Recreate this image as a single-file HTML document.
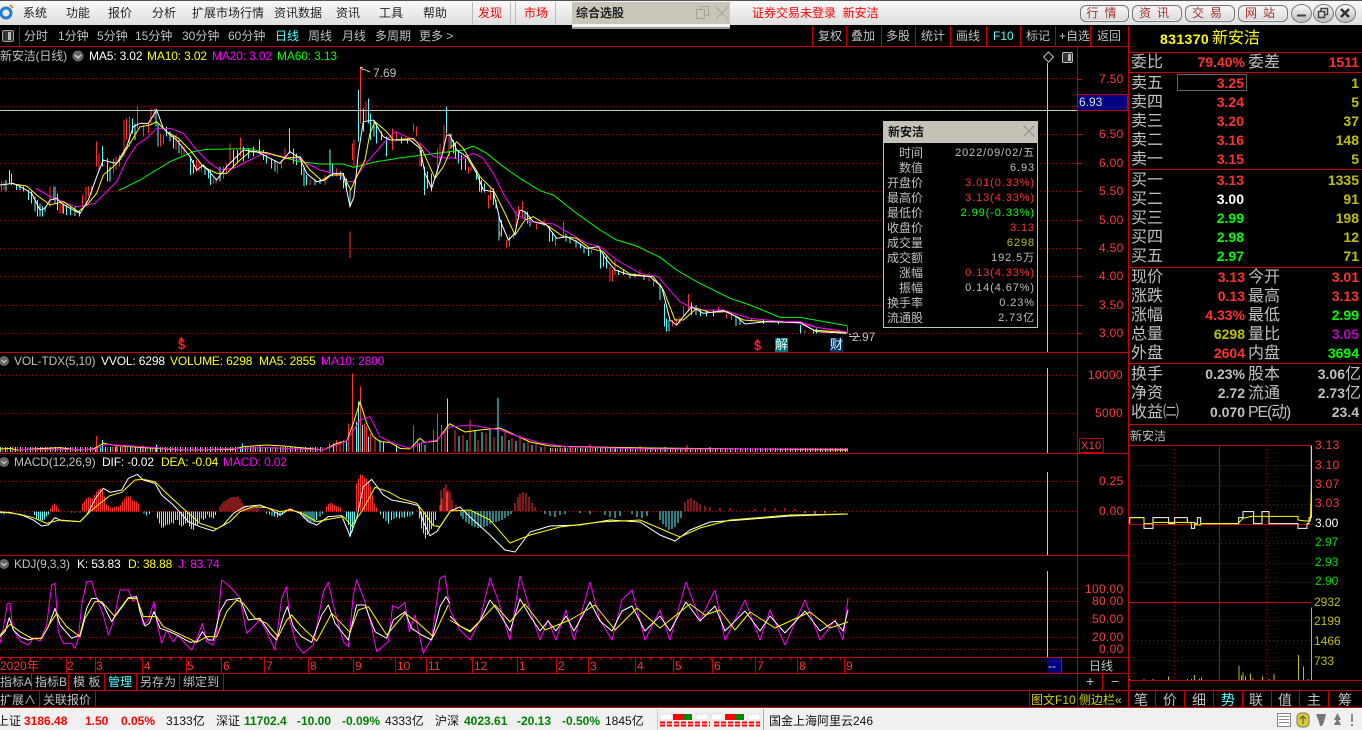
<!DOCTYPE html>
<html lang="zh"><head><meta charset="utf-8"><title>新安洁</title>
<style>
html,body{margin:0;padding:0;background:#000;width:1362px;height:730px;overflow:hidden}
body{position:relative;font-family:"Liberation Sans","WenQuanYi Zen Hei","Noto Sans CJK SC",sans-serif;font-size:12px;color:#c0c0c0}
.t{position:absolute;white-space:nowrap;line-height:16px;height:16px}
.box{position:absolute}
.m{color:#222;font-size:12px;top:5px}
.r{color:#ff3232}.y{color:#ff0}.g{color:#0f0}.p{color:#f0f}.c{color:#5ff}.w{color:#fff}.o{color:#c0c000}.gy{color:#c0c0c0}
.i{font-size:12px;top:48px;letter-spacing:-.15px}
.a{color:#ff3a3a;font-size:12px;letter-spacing:.3px}
.l{position:absolute;left:1131px;margin-top:1px;font-size:16px;line-height:18px;height:18px;color:#c0c0c0;white-space:nowrap}
.l2{left:1248px}
.v{position:absolute;right:117px;font-size:14px;font-weight:bold;line-height:18px;height:18px;white-space:nowrap;letter-spacing:0}
.v2{right:3px}
.tb{color:#c0c0c0;top:28px;font-size:12px}
.btn{position:absolute;top:5px;height:15px;border:1px solid #777;border-radius:6px;background:linear-gradient(#f8f8f8,#d8d8d8);color:#a83030;text-align:center;line-height:15px;font-size:12px;letter-spacing:6px;box-shadow:inset 0 0 0 1px #eee}
.cb{position:absolute;top:4px;width:19px;height:17px;border:1px solid #777;border-radius:50%;background:linear-gradient(#fafafa,#bbb)}
.tl{right:439px;color:#c0c0c0}
.tv{right:327px;letter-spacing:.9px;font-size:11px;color:#c0c0c0}
.x{color:#ff3232;font-size:12px;top:658px}
.st{top:713px;font-size:12px;color:#111}
.sr{color:#f00;font-weight:bold}.sg{color:#008000;font-weight:bold}
.tab{color:#c0c0c0;top:692px;font-size:14px}
</style></head><body>

<svg class="box" style="left:0;top:0" width="1362" height="730" xmlns="http://www.w3.org/2000/svg" fill="none">
<!-- dotted grid -->
<path stroke="#a80000" stroke-dasharray="1 3" d="M0 78.5H1077M0 106.5H1077M0 134.5H1077M0 163.5H1077M0 191.5H1077M0 220.5H1077M0 248.5H1077M0 276.5H1077M0 305.5H1077M0 333.5H1077M0 375.5H1077M0 413.5H1077M0 481.5H1077M0 511.5H1077M0 588.5H1077M0 601.5H1077M0 619.5H1077M0 637.5H1077M0 649.5H1077"/>
<!-- main candles left -->
<g transform="translate(0 60) scale(.33333)" stroke-width="3" shape-rendering="crispEdges">
<path stroke="#55ffff" d="M18 360V395M28 330V370M35 340V375M50 375V390M60 375V392M70 380V395M85 390V420M95 395V430M105 410V455M113 420V470M120 430V470M128 440V470M135 440V455M165 380V430M172 400V450M190 430V460M200 435V465M212 440V465M225 440V468M238 455V470M307 258V320M322 295V365M330 320V365M397 175V220M405 190V240M468 145V200M474 190V260M500 200V230M510 215V245M520 225V265M537 240V280M572 290V345M580 300V340M615 320V345M625 330V355M632 330V375M660 320V365M700 270V325M712 270V310M730 260V305M745 265V295M760 260V290M778 238V280M790 270V300M800 285V310M815 295V325M825 300V335M868 205V280M880 265V310M890 280V315M905 300V345M912 320V378M920 345V375M945 360V375M960 360V372M990 268V340M997 310V350M1022 335V360M1030 350V385M1040 355V395M1050 390V440M1075 88V245M1090 145V215M1105 115V190M1112 160V240M1122 180V230M1130 190V250M1145 215V240M1160 230V290M1205 230V250M1222 235V250M1265 270V320M1273 320V405M1282 335V385M1295 340V395M1340 140V220"/>
<path stroke="#ff3232" d="M5 365V395M12 365V390M150 380V440M160 380V420M180 430V460M187 430V460M248 405V440M258 380V430M265 380V410M275 378V405M290 245V320M297 280V330M340 295V340M348 290V330M358 285V320M372 180V290M380 175V240M388 170V260M412 140V205M430 195V230M445 190V220M453 145V190M462 145V175M482 220V260M490 225V250M528 225V270M545 260V285M552 260V290M590 300V335M597 305V335M605 310V335M640 355V370M648 355V370M670 320V355M680 310V340M690 250V310M722 232V290M833 310V340M845 300V325M855 265V300M930 360V375M975 345V375M1010 325V350M1050 515V594M1058 250V300M1062 240V320M1082 20V190M1098 125V180M1178 205V270M1190 215V245M1240 190V215M1250 200V230M1260 250V320M1312 265V340M1320 250V310M1332 195V280M1347 220V290"/>
</g>
<g transform="translate(0 60) scale(.33333)" stroke-width="3">
<polyline stroke="#0f0" points="355,392 420,360 510,305 580,275 620,268 750,266 820,285 900,305 960,312 1030,312 1060,322 1130,305 1210,292 1270,285 1350,275"/>
<polyline stroke="#f0f" points="108,385 150,410 190,425 225,440 250,438 285,430 320,395 350,365 380,300 410,255 440,235 470,205 510,205 550,220 590,270 630,310 660,330 700,325 750,300 790,280 850,290 890,295 960,330 1020,345 1040,365 1060,365 1090,320 1150,250 1185,215 1230,235 1260,250 1300,290 1350,295"/>
<polyline stroke="#ff0" points="40,372 80,378 110,405 150,435 190,425 235,455 265,430 290,400 310,345 340,320 360,300 390,250 420,200 450,195 470,185 500,215 535,235 570,270 610,320 650,340 680,340 720,300 750,275 800,278 860,295 900,290 930,330 965,362 990,345 1030,345 1052,390 1075,340 1095,300 1110,220 1125,185 1160,215 1180,240 1240,235 1265,265 1305,355 1330,320 1350,275"/>
<polyline stroke="#fff" points="0,375 40,370 70,385 95,400 120,450 135,445 150,420 170,415 185,430 210,445 240,460 265,420 290,350 310,300 325,305 350,310 380,260 400,200 420,190 445,190 470,150 490,205 510,225 530,240 570,290 590,330 610,315 650,360 680,320 710,290 730,270 770,275 800,290 840,310 870,275 900,295 920,340 950,365 975,360 1000,340 1030,340 1050,440 1062,410 1075,280 1090,185 1120,180 1150,230 1170,240 1230,240 1260,265 1275,340 1295,385 1325,290 1340,225 1350,225"/>
</g>
<!-- main candles right -->
<g transform="translate(450 120) scale(.33333)" stroke-width="3" shape-rendering="crispEdges">
<path stroke="#55ffff" d="M3 40V80M10 60V100M17 70V115M25 90V130M34 105V150M47 115V150M80 150V180M88 165V215M95 180V218M103 190V218M130 205V255M138 240V265M147 285V362M155 300V350M225 275V300M232 275V310M240 290V320M298 320V365M307 340V365M348 340V365M360 350V370M378 360V382M392 370V385M402 380V400M415 385V408M452 390V445M460 400V440M470 410V445M505 450V465M520 450V465M540 460V475M555 460V472M582 465V480M630 490V540M643 550V620M650 595V635M657 600V635M725 548V585M738 555V585M752 570V590M770 570V590M790 570V590M858 590V618M870 600V615M940 600V612M985 605V612M1052 615V640M1090 630V640M1100 625V640M1145 635V640"/>
<path stroke="#ff3232" d="M55 140V160M63 140V155M115 225V265M122 205V240M150 335V350M170 360V383M178 345V380M190 340V355M198 270V320M205 258V300M217 245V295M260 310V328M282 295V320M316 350V378M340 305V350M425 390V400M480 440V485M487 450V485M495 420V465M570 450V470M597 470V485M610 475V500M668 600V620M680 595V615M690 590V610M700 560V590M716 522V575M805 560V575M830 580V595M845 585V600M905 595V605M1065 630V640M1192 618V640"/>
</g>
<g transform="translate(450 120) scale(.33333)" stroke-width="3">
<polyline stroke="#0f0" points="0,95 40,90 70,78 110,100 160,140 210,175 270,212 310,225 380,280 450,330 500,360 560,378 630,412 680,450 740,485 840,535 900,555 990,592 1050,592 1190,617"/>
<polyline stroke="#f0f" points="0,112 30,118 70,100 100,115 130,160 165,230 200,285 240,305 310,312 350,335 410,370 450,380 500,420 570,460 625,470 650,500 690,545 740,570 820,570 900,595 1000,605 1050,610 1100,622 1190,636"/>
<polyline stroke="#ff0" points="0,85 20,65 40,85 60,120 90,170 130,210 165,280 195,345 225,300 250,290 290,315 340,350 380,355 420,385 460,395 490,430 540,462 610,470 640,510 675,600 700,600 740,565 780,577 830,575 880,600 950,605 1050,608 1090,630 1190,638"/>
<polyline stroke="#fff" points="0,45 20,90 50,110 80,160 100,210 130,215 150,300 175,360 195,340 210,270 225,275 250,305 290,315 320,355 350,350 380,365 410,385 445,380 470,420 495,450 540,465 600,470 635,500 660,600 680,615 700,590 725,560 760,580 820,572 860,590 885,612 950,605 1050,608 1100,635 1190,640"/>
<path stroke="#f0f" d="M1000 605H1050L1100 622L1190 636"/>
</g>
<!-- high low pointers -->
<path stroke="#c0c0c0" d="M360 67.5H363M360 67.5L363 70M363 69L370 72M849 334.5H851M849 336.5H860"/>
<!-- crosshair -->
<path stroke="#c8c8c8" d="M0 110.5H1078M1047.5 63V353M1047.5 368V453M1047.5 472V555M1047.5 571V657"/>
<path stroke="#c0c0c0" d="M1048.5 52L1053.5 57L1048.5 62L1043.5 57Z"/>
<rect x="1062.5" y="52.5" width="10" height="10" rx="1.5" stroke="#bbb" fill="#333"/><rect x="1068" y="54" width="3" height="7" fill="#bbb"/>

<!-- volume -->
<g stroke-width="1" shape-rendering="crispEdges">
<path d="M0 449.5H325" stroke="#55ffff" stroke-width="5" stroke-dasharray="1 4"/>
<path d="M2 449.5H325" stroke="#ff3232" stroke-width="5" stroke-dasharray="1 4"/>
<path d="M550 450H848" stroke="#55ffff" stroke-width="4" stroke-dasharray="1 4"/>
<path d="M552 450H848" stroke="#ff3232" stroke-width="4" stroke-dasharray="1 4"/>
</g>
<g transform="translate(0 355) scale(.33333)" stroke-width="3" shape-rendering="crispEdges">
<path stroke="#ff3232" d="M1057 55V291M1081 95V291M1045 205V291M1093 205V291M1100 215V291M1112 235V291M1125 250V291M1240 212V291M1252 250V291M1265 260V291M1300 225V291M1312 175V291M1325 210V291M1335 230V291M290 243V291M988 265V291M1010 255V291M1020 258V291M1030 255V291M375 268V291M430 272V291M350 270V291M850 272V291M760 272V291"/>
<path stroke="#55ffff" d="M1069 200V291M1075 140V291M1087 210V291M1105 245V291M1140 255V291M1150 262V291M1190 270V291M1342 130V291M307 255V291M1000 265V291M1040 255V291M728 265V291M780 270V291M470 268V291M1275 270V291M1258 265V291"/>
</g>
<g stroke-width="1" shape-rendering="crispEdges">
<path stroke="#ff3232" d="M455 430V452M463 435V452M470 420V452M478 440V452M486 433V452M494 437V452M505 432V452M512 438V452M520 435V452M528 442V452M536 444V452M545 446V452M560 445V452M570 446V452M590 444V452M640 446V452M687 445V452"/>
<path stroke="#55ffff" d="M459 436V452M467 440V452M475 430V452M482 432V452M490 430V452M498 398V452M502 436V452M509 440V452M516 441V452M524 443V452M532 445V452M541 447V452M565 447V452M615 447V452M665 447V452M710 447V452"/>
</g>
<g transform="translate(0 355) scale(.33333)" stroke-width="3">
<polyline stroke="#ff0" points="0,282 30,280 50,285 100,282 180,278 230,285 280,282 310,265 350,272 420,277 470,280 550,285 700,283 730,275 800,270 850,273 970,285 1010,265 1040,258 1060,205 1080,140 1100,205 1120,245 1140,260 1170,262 1200,280 1230,282 1260,250 1275,262 1310,258 1350,205"/>
<polyline stroke="#f0f" points="50,284 280,284 320,268 420,275 560,285 800,278 970,285 1040,258 1080,195 1110,185 1140,245 1180,265 1230,280 1260,265 1310,255 1350,215"/>
</g>
<polyline stroke="#ff0" points="450,424 465,432 480,430 500,428 515,435 530,442 550,446 590,447 650,448 848,450"/>
<polyline stroke="#f0f" points="450,427 470,425 500,430 520,437 540,443 570,447 650,449 848,449"/>
<!-- macd -->
<g transform="translate(0 355) scale(.33333)" stroke-width="3" shape-rendering="crispEdges">
<path stroke="#ff3232" d="M152 469V460M158 469V450M164 469V445M170 469V452M176 469V462M248 469V445M254 469V438M260 469V430M266 469V428M272 469V428M278 469V430M284 469V420M290 469V410M296 469V403M302 469V400M308 469V405M314 469V425M320 469V448M326 469V452M332 469V458M338 469V458M344 469V456M350 469V455M356 469V455M362 469V450M368 469V440M374 469V430M380 469V424M386 469V424M392 469V425M398 469V437M404 469V438M410 469V440M416 469V445M660 469V455M666 469V445M672 469V440M678 469V436M684 469V432M690 469V428M696 469V426M702 469V426M708 469V426M714 469V425M720 469V432M726 469V444M732 469V452M738 469V452M744 469V458M750 469V458M756 469V458M762 469V458M768 469V458M774 469V460M860 469V462M866 469V460M872 469V460M878 469V462M980 469V455M986 469V447M992 469V444M998 469V446M1004 469V450M1010 469V453M1016 469V456M1022 469V458M1070 469V385M1076 469V370M1082 469V358M1088 469V360M1094 469V368M1100 469V370M1106 469V380M1112 469V395M1118 469V420M1124 469V445M1130 469V458M1320 469V450M1326 469V430M1332 469V405M1338 469V388M1344 469V405M1350 469V410"/>
<path stroke="#55ffff" d="M4 469V475M12 469V478M20 469V476M104 469V480M110 469V490M116 469V494M122 469V495M128 469V497M134 469V493M140 469V485M146 469V478M215 469V472M225 469V472M240 469V472M432 469V476M440 469V482M448 469V477M472 469V490M478 469V505M484 469V518M490 469V517M496 469V512M502 469V508M508 469V508M514 469V503M520 469V505M526 469V495M532 469V495M538 469V510M544 469V515M550 469V512M556 469V505M562 469V503M568 469V515M574 469V522M580 469V525M586 469V512M592 469V510M598 469V500M604 469V490M610 469V495M616 469V490M622 469V478M628 469V487M634 469V488M640 469V490M646 469V480M800 469V475M808 469V478M816 469V483M824 469V485M832 469V488M840 469V485M848 469V478M905 469V480M912 469V490M918 469V495M924 469V500M930 469V503M936 469V500M942 469V503M950 469V495M960 469V485M968 469V475M1040 469V490M1046 469V510M1052 469V545M1058 469V530M1064 469V500M1142 469V478M1150 469V490M1158 469V498M1166 469V505M1174 469V495M1182 469V492M1190 469V488M1198 469V490M1206 469V488M1214 469V488M1222 469V485M1230 469V485M1238 469V478M1258 469V490M1264 469V520M1270 469V535M1276 469V550M1282 469V540M1288 469V530M1294 469V522M1300 469V510M1306 469V495"/>
</g>
<g stroke-width="1" shape-rendering="crispEdges">
<path stroke="#ff3232" d="M441 511V490M444 511V488M447 511V492M452 511V500M456 511V505M515 511V503M518 511V497M520 511V494M523 511V492M526 511V493M529 511V497M532 511V503M535 511V507M685 511V502M688 511V499M691 511V498M694 511V500M697 511V502M700 511V504M705 511V506M710 511V507M720 511V508M730 511V508M755 511V509M765 511V508M775 511V508M785 511V508M795 511V509"/>
<path stroke="#55ffff" d="M461 511V516M463 511V519M466 511V522M469 511V524M472 511V526M475 511V527M478 511V528M481 511V528M484 511V527M487 511V526M490 511V524M493 511V522M496 511V522M499 511V521M502 511V520M505 511V518M508 511V516M511 511V514M545 511V514M550 511V516M555 511V517M560 511V515M565 511V514M580 511V513M590 511V514M605 511V515M610 511V517M615 511V518M620 511V516M632 511V514M637 511V517M642 511V518M647 511V516M660 511V520M663 511V524M666 511V527M669 511V530M672 511V529M675 511V527M678 511V523M681 511V518M805 511V513M815 511V514M825 511V513M835 511V512"/>
</g>
<g transform="translate(0 355) scale(.33333)" stroke-width="3">
<polyline stroke="#fff" points="0,472 30,472 70,482 100,495 125,513 145,510 165,488 185,497 240,500 260,480 290,425 310,400 330,412 365,405 385,370 412,358 430,375 465,385 485,420 520,450 565,500 600,515 640,528 670,510 700,475 735,455 780,450 810,462 840,480 870,462 900,475 925,500 950,510 985,485 1025,482 1050,543 1070,490 1090,395 1115,373 1150,420 1175,435 1230,445 1255,452 1270,500 1290,542 1310,530 1350,470"/>
<polyline stroke="#ff0" points="0,470 60,478 100,488 140,505 180,495 240,500 270,470 300,445 330,422 365,412 405,375 430,373 465,380 500,415 560,470 600,505 650,522 690,500 720,470 760,455 800,458 840,470 870,465 900,472 950,500 1000,490 1030,485 1055,512 1085,470 1125,397 1165,410 1200,430 1250,445 1270,470 1300,512 1320,515 1350,470"/>
</g>
<polyline stroke="#fff" points="450,511 460,507 470,517 490,535 505,550 515,552 530,532 550,526 580,525 610,520 640,522 660,535 675,541 690,530 710,522 740,520 790,516 848,514"/>
<polyline stroke="#ff0" points="450,511 470,510 490,520 510,543 530,535 560,527 600,522 640,520 680,537 700,528 730,520 790,515 848,514"/>
<!-- kdj -->
<g transform="translate(0 555) scale(.33333)" stroke-width="3" stroke-linejoin="round">
<polyline stroke="#f0f" points="0,265 10,220 22,145 30,145 38,220 60,258 85,270 100,250 120,258 140,210 155,90 165,85 175,230 190,265 215,265 225,280 235,250 245,150 260,80 275,78 290,130 310,180 325,240 340,200 360,105 385,105 400,140 410,125 430,210 445,195 462,140 470,200 485,265 500,225 520,260 535,240 550,260 575,285 595,240 607,205 620,260 640,270 650,230 665,75 690,95 720,130 740,235 780,195 800,230 825,285 845,130 860,95 870,200 890,270 910,295 940,270 970,110 985,82 1000,150 1030,260 1045,275 1060,120 1070,75 1095,140 1115,215 1130,290 1165,260 1178,152 1195,160 1215,143 1228,230 1245,180 1270,295 1295,250 1320,70 1335,62 1350,165"/>
<polyline stroke="#fff" points="0,245 15,230 28,188 40,225 60,245 85,255 105,250 125,250 145,215 165,160 180,210 215,250 240,240 260,160 275,130 290,130 310,150 335,200 350,175 385,128 410,125 420,170 435,213 448,205 462,170 480,220 510,230 530,240 570,262 590,260 607,230 625,255 640,255 660,170 680,135 720,130 745,195 780,190 810,235 830,255 850,185 862,155 880,215 905,245 935,262 965,180 985,150 1005,205 1045,255 1070,150 1095,150 1125,230 1160,250 1180,195 1215,170 1235,220 1265,240 1295,255 1320,155 1338,125 1350,145"/>
<polyline stroke="#ff0" points="0,240 30,208 60,230 95,250 125,250 150,205 170,175 200,215 240,245 255,190 285,140 305,140 345,185 385,130 410,130 430,185 470,185 490,215 540,238 590,262 620,245 650,245 680,170 710,135 730,145 765,190 800,205 835,245 860,195 875,180 900,210 950,258 995,175 1050,232 1075,165 1105,155 1160,240 1215,175 1250,200 1300,245 1345,150"/>
</g>
<polyline stroke="#f0f" stroke-linejoin="round" points="450,610 460,630 470,640 480,620 490,578 498,600 510,640 520,576 530,610 540,640 548,620 556,640 566,610 574,640 590,582 600,620 612,640 622,600 632,590 645,640 660,610 670,640 686,582 700,620 715,590 725,640 745,600 760,640 770,610 785,645 805,600 820,640 835,620 843,640 848,598"/>
<polyline stroke="#fff" stroke-linejoin="round" points="450,616 460,626 470,631 480,621 490,600 498,611 510,631 520,599 530,616 540,631 548,621 556,631 566,616 574,631 590,602 600,621 612,631 622,611 632,606 645,631 660,616 670,631 686,602 700,621 715,606 725,631 745,611 760,631 770,616 785,633 805,611 820,631 835,621 843,631 848,610"/>
<polyline stroke="#ff0" stroke-linejoin="round" points="450,620 470,632 495,605 510,622 525,604 545,630 570,620 595,605 615,630 637,608 660,628 690,604 705,615 720,610 735,630 750,612 775,628 810,612 830,628 848,622"/>

<!-- frame lines -->
<g stroke="#c80000" shape-rendering="crispEdges">
<path d="M0 46.5H1128M0 352.5H1128M0 453.5H1128M0 555.5H1128M0 657.5H1128M0 673.5H1128M0 690.5H1362M0 707.5H1362"/>
<path d="M1077.5 46V708M1128.5 26V708M19.5 26V46"/>
<path d="M812.5 26V46M846.5 26V46M881.5 26V46M915.5 26V46M950.5 26V46M986.5 26V46M1020.5 26V46M1055.5 26V46M1090.5 26V46"/>
<path d="M1077 94.5H1128M1077 110.5H1128M1077 79.5H1082M1077 106.5H1082M1077 134.5H1082M1077 163.5H1082M1077 191.5H1082M1077 220.5H1082M1077 248.5H1082M1077 276.5H1082M1077 305.5H1082M1077 333.5H1082"/>
<path d="M66.5 657V673M95.5 657V673M142.5 657V673M186.5 657V673M221.5 657V673M264.5 657V673M308.5 657V673M353.5 657V673M395.5 657V673M426.5 657V673M472.5 657V673M517.5 657V673M556.5 657V673M588.5 657V673M635.5 657V673M673.5 657V673M712.5 657V673M755.5 657V673M797.5 657V673M844.5 657V673M1061.5 657V673"/>
<path d="M0 658.5H844" stroke-width="3" stroke-dasharray="1 9"/>
<path d="M31.5 673V690M68.5 673V690M104.5 673V690M136.5 673V690M179.5 673V690M223.5 673V690M39.5 690V708M95.5 690V708M1029.5 690V708M1102.5 673V690"/>
<path d="M1155.5 690V708M1184.5 690V708M1213.5 690V708M1242.5 690V708M1271.5 690V708M1299.5 690V708M1328.5 690V708"/>
<path d="M1129 52.5H1362M1129 72.5H1362M1129 169.5H1362M1129 267.5H1362M1129 363.5H1362M1129 424.5H1362M1129 445.5H1311M1129 602.5H1311M1129 680.5H1362M1219.5 445V680"/>
<path d="M1079 438.5H1103M1079 452.5H1103M1079.5 438V452M1103.5 438V452"/>
</g>
<rect x="1047" y="658" width="14" height="15" fill="#000080"/>
<rect x="1077.5" y="94.5" width="50" height="16" fill="#000080" stroke="#c80000"/>
<!-- intraday grid -->
<path stroke="#a80000" stroke-dasharray="1 3" d="M1129 465.5H1311M1129 485.5H1311M1129 504.5H1311M1129 543.5H1311M1129 563.5H1311M1129 582.5H1311M1129 620.5H1311M1129 640.5H1311M1129 660.5H1311M1174.5 445V680M1266.5 445V680"/>
<path stroke="#c80000" d="M1129 524.5H1311"/>
<g transform="translate(1128 425) scale(.33333)" stroke-width="3">
<path stroke="#c0c000" shape-rendering="crispEdges" d="M550 548V765M333 722V765M345 742V765M340 752V765M352 755V765M367 745V765M375 760V765M403 755V765M438 747V765M511 690V765M526 725V765M540 762V765M122 755V765M200 750V765M215 760V765M220 757V765M48 762V765M75 762V765M5 762V765M190 762V765M178 762V765M423 762V765"/>
<path stroke="#fff" d="M5 296V278H48V310H75V278H122V296H140V278H178V293H190V310H200V296H208V278H218V296H332V278H345V260H377V296H402V260H423V296H510V310H537V296H543V278H550V62"/>
<path stroke="#ff0" d="M5 296V278H48V296H75V292H200V300H218V296H330L345 280L370 274H510V285L530 288H547L550 195V240"/>
</g>

<!-- top bar -->
<rect x="0" y="0" width="1362" height="25" fill="url(#tg)"/>
<defs><linearGradient id="tg" x1="0" y1="0" x2="0" y2="1"><stop offset="0" stop-color="#fafafa"/><stop offset="1" stop-color="#dedede"/></linearGradient></defs>
<path d="M0 .5H1362" stroke="#555"/>
<path d="M472.5 2V25M510.5 2V25M515.5 2V25M555.5 2V25" stroke="#bbb"/>
<rect x="572" y="2" width="158" height="22" fill="#c9c5b9"/>
<rect x="572" y="24" width="158" height="3" fill="#f2f2ee"/>
<rect x="572" y="27" width="158" height="2" fill="#999"/>
<circle cx="6" cy="13" r="5" stroke="#1f7fd0" stroke-width="3"/>
<path d="M10 5L13 8" stroke="#e09020" stroke-width="2"/>
<path d="M696.5 9.5H704.5V18.5H696.5ZM700.5 9.5V6.5H708.5V15.5H704.5" stroke="#a8a498"/>
<path d="M716 7L728 19M728 7L716 19" stroke="#a8a498"/>
<!-- toolbar left icon -->
<rect x="2.5" y="30.5" width="11" height="11" rx="2" stroke="#aaa" fill="#333"/><rect x="8" y="32" width="3" height="8" fill="#bbb"/>
<!-- $ arrow caps -->
<path d="M181.500 337L184 340H179ZM757.500 339L760 342H755Z" fill="#ff2020"/>
<!-- status bar -->
<rect x="0" y="708" width="1362" height="22" fill="#f0f0f0"/>
<path d="M0 708.5H1362" stroke="#fff"/>
<path d="M763.5 709V730" stroke="#aaa"/>
<path d="M657.5 709V730" stroke="#ccc"/>
<g shape-rendering="crispEdges">
<rect x="660" y="714" width="12" height="6" fill="#fff" stroke="#ddd"/><rect x="673" y="714" width="11" height="6" fill="#f00"/><rect x="684" y="714" width="8" height="6" fill="#080"/><rect x="696" y="714" width="12" height="6" fill="#fff" stroke="#ddd"/>
<rect x="711" y="714" width="12" height="6" fill="#fff" stroke="#ddd"/><rect x="725" y="714" width="10" height="6" fill="#f00"/><rect x="735" y="714" width="9" height="6" fill="#080"/><rect x="748" y="714" width="12" height="6" fill="#fff" stroke="#ddd"/>
<path d="M660 722.5H710M660 725.5H710M714 722.5H760M714 725.5H760" stroke="#f00" stroke-width="2" stroke-dasharray="5 2"/>
</g>
<rect x="1277.5" y="713.5" width="13" height="13" fill="#fff" stroke="#888"/>
<path d="M1279 716.5H1289M1279 719.5H1289M1279 722.5H1289" stroke="#888"/>
<rect x="1297" y="713" width="12" height="14" rx="4" fill="#d8c838" stroke="#776"/>
<path d="M1303 716V724M1300 719L1303 716L1306 719" stroke="#553"/>
<path d="M1316 714H1326L1324 722L1322 726H1320L1319 722Z" fill="#777"/>
<path d="M1337.500 713L1341 720H1334ZM1337.500 718L1341 725H1334Z" fill="#777"/>
<rect x="1351" y="714" width="2" height="8" fill="#888"/><rect x="1351" y="724" width="2" height="2" fill="#888"/>
</svg>

<!-- menu -->
<span class="t m" style="left:23px">系统</span><span class="t m" style="left:66px">功能</span><span class="t m" style="left:108px">报价</span><span class="t m" style="left:152px">分析</span><span class="t m" style="left:192px">扩展市场行情</span><span class="t m" style="left:274px">资讯数据</span><span class="t m" style="left:336px">资讯</span><span class="t m" style="left:379px">工具</span><span class="t m" style="left:423px">帮助</span>
<span class="t m" style="left:478px;color:#f00">发现</span><span class="t m" style="left:524px;color:#f00">市场</span>
<span class="t m" style="left:576px;color:#222;font-weight:bold">综合选股</span>
<span class="t m" style="left:752px;color:#f00">证券交易未登录&nbsp;&nbsp;新安洁</span>
<div class="btn" style="left:1080px;width:47px">行情</div><div class="btn" style="left:1132px;width:48px">资讯</div><div class="btn" style="left:1185px;width:48px">交易</div><div class="btn" style="left:1238px;width:48px">网站</div>
<div class="cb" style="left:1291px"></div><div class="cb" style="left:1313px"></div><div class="cb" style="left:1335px"></div>
<svg class="box" style="left:1291px;top:4px" width="66" height="19" fill="none"><path d="M6 11.500H15" stroke="#444" stroke-width="2"/><path d="M27.500 7.500H33.500V13.500H27.500ZM30 7V4.500H36.500V10.500H33.500" stroke="#444" stroke-width="1.500"/><path d="M50 5L58 13M58 5L50 13" stroke="#333" stroke-width="2.500"/></svg>

<!-- toolbar -->
<span class="t tb" style="left:24px">分时</span><span class="t tb" style="left:58px">1分钟</span><span class="t tb" style="left:97px">5分钟</span><span class="t tb" style="left:135px">15分钟</span><span class="t tb" style="left:182px">30分钟</span><span class="t tb" style="left:228px">60分钟</span><span class="t tb c" style="left:275px;color:#5ff">日线</span><span class="t tb" style="left:308px">周线</span><span class="t tb" style="left:342px">月线</span><span class="t tb" style="left:375px">多周期</span><span class="t tb" style="left:419px">更多 &gt;</span>
<span class="t tb" style="left:818px">复权</span><span class="t tb" style="left:851px">叠加</span><span class="t tb" style="left:886px">多股</span><span class="t tb" style="left:921px">统计</span><span class="t tb" style="left:956px">画线</span><span class="t tb" style="left:993px;color:#5ff">F10</span><span class="t tb" style="left:1026px">标记</span><span class="t tb" style="left:1059px">+自选</span><span class="t tb" style="left:1097px">返回</span>

<!-- info lines -->
<span class="t i" style="left:0">新安洁(日线)</span>
<svg class="box" style="left:72px;top:50px" width="12" height="12"><circle cx="6" cy="6" r="5.500" fill="#666"/><path d="M3 5L6 8L9 5" stroke="#ddd" stroke-width="1.300" fill="none"/></svg>
<span class="t i w" style="left:89px">MA5: 3.02</span><span class="t i y" style="left:147px">MA10: 3.02</span><span class="t i p" style="left:212px">MA20: 3.02</span><span class="t i g" style="left:277px">MA60: 3.13</span>
<span class="t gy" style="left:373px;top:65px">7.69</span>
<span class="t gy" style="left:852px;top:329px">2.97</span>

<span class="t a" style="left:1099px;top:71px">7.50</span><span class="t" style="left:1079px;top:94px;color:#ddd;font-size:12px">6.93</span><span class="t a" style="left:1099px;top:126px">6.50</span><span class="t a" style="left:1099px;top:155px">6.00</span><span class="t a" style="left:1099px;top:183px">5.50</span><span class="t a" style="left:1099px;top:212px">5.00</span><span class="t a" style="left:1099px;top:240px">4.50</span><span class="t a" style="left:1099px;top:268px">4.00</span><span class="t a" style="left:1099px;top:297px">3.50</span><span class="t a" style="left:1099px;top:325px">3.00</span>

<span class="t r" style="left:178px;top:337px;font-weight:bold;font-size:13px;color:#ff2020">$</span>
<span class="t r" style="left:754px;top:338px;font-weight:bold;font-size:13px;color:#ff2020">$</span>
<div class="box" style="left:775px;top:338px;width:13px;height:14px;background:#007272;color:#dff;font-size:13px;line-height:14px;text-align:center">解</div>
<div class="box" style="left:830px;top:338px;width:13px;height:14px;background:#06305f;color:#dff;font-size:13px;line-height:14px;text-align:center">财</div>

<!-- volume label -->
<svg class="box" style="left:0;top:355px" width="12" height="12"><circle cx="4" cy="6" r="5" fill="#666"/><path d="M1.500 5L4 7.500L6.500 5" stroke="#ddd" fill="none"/></svg>
<span class="t i" style="left:14px;top:353px">VOL-TDX(5,10)</span><span class="t i w" style="left:101px;top:353px">VVOL: 6298</span><span class="t i y" style="left:170px;top:353px">VOLUME: 6298</span><span class="t i y" style="left:259px;top:353px">MA5: 2855</span><span class="t i p" style="left:321px;top:353px">MA10: 2800</span>
<span class="t a" style="left:1088px;top:367px">10000</span><span class="t a" style="left:1095px;top:405px">5000</span><span class="t a" style="left:1081px;top:438px;font-size:11px">X10</span>

<svg class="box" style="left:0;top:456px" width="12" height="12"><circle cx="4" cy="6" r="5" fill="#666"/><path d="M1.500 5L4 7.500L6.500 5" stroke="#ddd" fill="none"/></svg>
<span class="t i" style="left:14px;top:454px">MACD(12,26,9)</span><span class="t i w" style="left:102px;top:454px">DIF: -0.02</span><span class="t i y" style="left:161px;top:454px">DEA: -0.04</span><span class="t i p" style="left:223px;top:454px">MACD: 0.02</span>
<span class="t a" style="left:1099px;top:473px">0.25</span><span class="t a" style="left:1099px;top:503px">0.00</span>

<svg class="box" style="left:0;top:558px" width="12" height="12"><circle cx="4" cy="6" r="5" fill="#666"/><path d="M1.500 5L4 7.500L6.500 5" stroke="#ddd" fill="none"/></svg>
<span class="t i" style="left:14px;top:556px">KDJ(9,3,3)</span><span class="t i w" style="left:77px;top:556px">K: 53.83</span><span class="t i y" style="left:128px;top:556px">D: 38.88</span><span class="t i p" style="left:178px;top:556px">J: 83.74</span>
<span class="t a" style="left:1085px;top:581px">100.00</span><span class="t a" style="left:1092px;top:593px">80.00</span><span class="t a" style="left:1092px;top:611px">50.00</span><span class="t a" style="left:1092px;top:629px">20.00</span><span class="t a" style="left:1099px;top:641px">0.00</span>

<!-- time axis -->
<span class="t x" style="left:0">2020年</span><span class="t x" style="left:67px">2</span><span class="t x" style="left:96px">3</span><span class="t x" style="left:144px">4</span><span class="t x" style="left:187px">5</span><span class="t x" style="left:223px">6</span><span class="t x" style="left:266px">7</span><span class="t x" style="left:310px">8</span><span class="t x" style="left:355px">9</span><span class="t x" style="left:397px">10</span><span class="t x" style="left:428px">11</span><span class="t x" style="left:474px">12</span><span class="t x" style="left:519px">1</span><span class="t x" style="left:558px">2</span><span class="t x" style="left:590px">3</span><span class="t x" style="left:637px">4</span><span class="t x" style="left:675px">5</span><span class="t x" style="left:714px">6</span><span class="t x" style="left:757px">7</span><span class="t x" style="left:799px">8</span><span class="t x" style="left:846px">9</span>
<span class="t" style="left:1048px;top:658px;color:#ddd;font-size:12px">--</span>
<span class="t" style="left:1089px;top:658px;font-size:12px">日线</span>
<span class="t" style="left:1086px;top:673px;font-size:14px">+</span><span class="t" style="left:1111px;top:673px;font-size:14px">−</span>

<!-- bottom tabs -->
<span class="t" style="left:0;top:674px">指标A</span><span class="t" style="left:35px;top:674px">指标B</span><span class="t" style="left:73px;top:674px">模 板</span><span class="t c" style="left:108px;top:674px">管理</span><span class="t" style="left:140px;top:674px">另存为</span><span class="t" style="left:183px;top:674px">绑定到</span>
<span class="t" style="left:0;top:692px">扩展∧</span><span class="t" style="left:43px;top:692px">关联报价</span>
<span class="t o" style="left:1031px;top:692px;color:#d0d000">图文F10</span><span class="t o" style="left:1079px;top:692px;color:#d0d000">侧边栏«</span>
<span class="t tab" style="left:1134px">笔</span><span class="t tab" style="left:1163px">价</span><span class="t tab" style="left:1192px">细</span><span class="t tab c" style="left:1221px;color:#5ff">势</span><span class="t tab" style="left:1249px">联</span><span class="t tab" style="left:1278px">值</span><span class="t tab" style="left:1307px">主</span><span class="t tab" style="left:1338px">筹</span>

<!-- status -->
<span class="t st" style="left:-3px">上证</span><span class="t st sr" style="left:24px">3186.48</span><span class="t st sr" style="left:85px">1.50</span><span class="t st sr" style="left:121px">0.05%</span><span class="t st" style="left:166px">3133亿</span>
<span class="t st" style="left:216px">深证</span><span class="t st sg" style="left:244px">11702.4</span><span class="t st sg" style="left:297px">-10.00</span><span class="t st sg" style="left:342px">-0.09%</span><span class="t st" style="left:385px">4333亿</span>
<span class="t st" style="left:435px">沪深</span><span class="t st sg" style="left:464px">4023.61</span><span class="t st sg" style="left:517px">-20.13</span><span class="t st sg" style="left:562px">-0.50%</span><span class="t st" style="left:605px">1845亿</span>
<span class="t st" style="left:769px">国金上海阿里云246</span>

<!-- right panel -->
<span class="t y" style="left:1160px;top:30px;font-size:14px;font-weight:bold;letter-spacing:.4px;line-height:18px;height:18px">831370</span>
<span class="t y" style="left:1212px;top:30px;font-size:16px;line-height:18px;height:18px">新安洁</span>
<span class="l" style="top:53px">委比</span><span class="v r" style="top:53px">79.40%</span><span class="l l2" style="top:53px">委差</span><span class="v v2 r" style="top:53px">1511</span>
<div class="box" style="left:1177px;top:74px;width:68px;height:15px;border:1px solid #666"></div>
<span class="l" style="top:74px">卖五</span><span class="v r" style="top:74px;right:118px">3.25</span><span class="v v2 o" style="top:74px">1</span>
<span class="l" style="top:93px">卖四</span><span class="v r" style="top:93px;right:118px">3.24</span><span class="v v2 o" style="top:93px">5</span>
<span class="l" style="top:112px">卖三</span><span class="v r" style="top:112px;right:118px">3.20</span><span class="v v2 o" style="top:112px">37</span>
<span class="l" style="top:131px">卖二</span><span class="v r" style="top:131px;right:118px">3.16</span><span class="v v2 o" style="top:131px">148</span>
<span class="l" style="top:150px">卖一</span><span class="v r" style="top:150px;right:118px">3.15</span><span class="v v2 o" style="top:150px">5</span>
<span class="l" style="top:171px">买一</span><span class="v r" style="top:171px;right:118px">3.13</span><span class="v v2 o" style="top:171px">1335</span>
<span class="l" style="top:190px">买二</span><span class="v w" style="top:190px;right:118px">3.00</span><span class="v v2 o" style="top:190px">91</span>
<span class="l" style="top:209px">买三</span><span class="v g" style="top:209px;right:118px">2.99</span><span class="v v2 o" style="top:209px">198</span>
<span class="l" style="top:228px">买四</span><span class="v g" style="top:228px;right:118px">2.98</span><span class="v v2 o" style="top:228px">12</span>
<span class="l" style="top:247px">买五</span><span class="v g" style="top:247px;right:118px">2.97</span><span class="v v2 o" style="top:247px">71</span>

<span class="l" style="top:268px">现价</span><span class="v r" style="top:268px">3.13</span><span class="l l2" style="top:268px">今开</span><span class="v v2 r" style="top:268px">3.01</span>
<span class="l" style="top:287px">涨跌</span><span class="v r" style="top:287px">0.13</span><span class="l l2" style="top:287px">最高</span><span class="v v2 r" style="top:287px">3.13</span>
<span class="l" style="top:306px">涨幅</span><span class="v r" style="top:306px">4.33%</span><span class="l l2" style="top:306px">最低</span><span class="v v2 g" style="top:306px">2.99</span>
<span class="l" style="top:325px">总量</span><span class="v o" style="top:325px">6298</span><span class="l l2" style="top:325px">量比</span><span class="v v2" style="top:325px;color:#c000c0">3.05</span>
<span class="l" style="top:344px">外盘</span><span class="v r" style="top:344px">2604</span><span class="l l2" style="top:344px">内盘</span><span class="v v2 g" style="top:344px">3694</span>

<span class="l" style="top:365px">换手</span><span class="v gy" style="top:365px">0.23%</span><span class="l l2" style="top:365px">股本</span><span class="v v2 gy" style="top:365px;right:1px">3.06<span style="font-size:16px;font-weight:normal">亿</span></span>
<span class="l" style="top:384px">净资</span><span class="v gy" style="top:384px">2.72</span><span class="l l2" style="top:384px">流通</span><span class="v v2 gy" style="top:384px;right:1px">2.73<span style="font-size:16px;font-weight:normal">亿</span></span>
<span class="l" style="top:403px">收益㈡</span><span class="v gy" style="top:403px">0.070</span><span class="l l2" style="top:403px;letter-spacing:-1.200px">PE(动)</span><span class="v v2 gy" style="top:403px">23.4</span>

<span class="t" style="left:1130px;top:428px;font-size:12px">新安洁</span>
<span class="t a" style="left:1315px;top:437px">3.13</span><span class="t a" style="left:1315px;top:457px">3.10</span><span class="t a" style="left:1315px;top:476px">3.07</span><span class="t a" style="left:1315px;top:495px">3.03</span><span class="t w" style="left:1315px;top:515px">3.00</span>
<span class="t g" style="left:1315px;top:534px;color:#0d0">2.97</span><span class="t g" style="left:1315px;top:554px;color:#0d0">2.93</span><span class="t g" style="left:1315px;top:573px;color:#0d0">2.90</span>
<span class="t o" style="left:1314px;top:594px">2932</span><span class="t o" style="left:1314px;top:613px">2199</span><span class="t o" style="left:1314px;top:633px">1466</span><span class="t o" style="left:1314px;top:653px">733</span>

<!-- tooltip -->
<div class="box" style="left:883px;top:121px;width:155px;height:207px;background:#000;border:1px solid #c4c1b6;box-sizing:border-box"></div>
<div class="box" style="left:883px;top:121px;width:155px;height:22px;background:#c4c1b6"></div>
<span class="t" style="left:888px;top:124px;color:#111;font-weight:bold;font-size:12px">新安洁</span>
<svg class="box" style="left:1023px;top:125px" width="12" height="12" fill="none"><path d="M.5 .5L11.500 11.500M11.500 .5L.5 11.500" stroke="#8f8c82"/></svg>
<span class="t tl" style="top:145px">时间</span><span class="t tv" style="top:145px">2022/09/02/五</span>
<span class="t tl" style="top:160px">数值</span><span class="t tv" style="top:160px">6.93</span>
<span class="t tl" style="top:175px">开盘价</span><span class="t tv r" style="top:175px;color:#ff3232">3.01(0.33%)</span>
<span class="t tl" style="top:190px">最高价</span><span class="t tv r" style="top:190px;color:#ff3232">3.13(4.33%)</span>
<span class="t tl" style="top:205px">最低价</span><span class="t tv" style="top:205px;color:#0f0">2.99(-0.33%)</span>
<span class="t tl" style="top:220px">收盘价</span><span class="t tv" style="top:220px;color:#ff3232">3.13</span>
<span class="t tl" style="top:235px">成交量</span><span class="t tv" style="top:235px;color:#c0c000">6298</span>
<span class="t tl" style="top:250px">成交额</span><span class="t tv" style="top:250px">192.5万</span>
<span class="t tl" style="top:265px">涨幅</span><span class="t tv" style="top:265px;color:#ff3232">0.13(4.33%)</span>
<span class="t tl" style="top:280px">振幅</span><span class="t tv" style="top:280px">0.14(4.67%)</span>
<span class="t tl" style="top:295px">换手率</span><span class="t tv" style="top:295px">0.23%</span>
<span class="t tl" style="top:310px">流通股</span><span class="t tv" style="top:310px">2.73亿</span>
</body></html>
